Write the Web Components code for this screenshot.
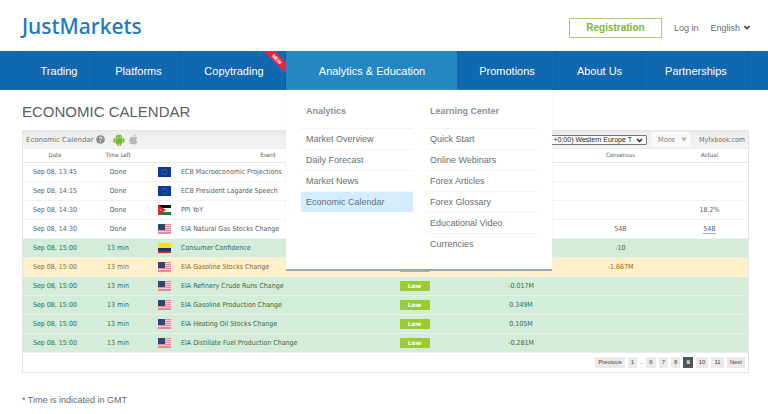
<!DOCTYPE html>
<html lang="en">
<head>
<meta charset="utf-8">
<title>JustMarkets – Economic Calendar</title>
<style>
  body { margin: 0; background: #fff; color: #666c70; font: 9px/12px "Liberation Sans", Arial, sans-serif; }
  main { padding: 0 19px 0 22px; }
  h1 { margin: 12px 0 8px; font-size: 15px; line-height: 20px; font-weight: 400; color: #5a6064; }
  .note { margin: 21px 0 0; font-size: 9px; line-height: 12px; }
</style>
</head>
<body>
<site-header></site-header>
<nav-bar>
  <nav-item label="Trading"></nav-item>
  <nav-item label="Platforms"></nav-item>
  <nav-item label="Copytrading" badge="NEW"></nav-item>
  <nav-item label="Analytics &amp; Education" active>
    <menu-column heading="Analytics" items="Market Overview|Daily Forecast|Market News|Economic Calendar" current="Economic Calendar"></menu-column>
    <menu-column heading="Learning Center" items="Quick Start|Online Webinars|Forex Articles|Forex Glossary|Educational Video|Currencies"></menu-column>
  </nav-item>
  <nav-item label="Promotions"></nav-item>
  <nav-item label="About Us"></nav-item>
  <nav-item label="Partnerships"></nav-item>
</nav-bar>
<main>
  <h1>ECONOMIC CALENDAR</h1>
  <economic-calendar></economic-calendar>
  <p class="note">* Time is indicated in GMT</p>
</main>
<script>
class BaseElement extends HTMLElement {
  connectedCallback() {
    if (this.shadowRoot) return;
    this.attachShadow({ mode: "open" }).innerHTML = this.render();
  }
}

customElements.define("site-header", class extends BaseElement {
  render() {
    return `<style>
      :host { display: block; }
      header { display: flex; align-items: center; height: 51px; padding: 0 18px 0 22px; box-sizing: border-box; }
      .logo { margin-right: auto; font: 500 21px/28px "Noto Sans", sans-serif; color: #2079bf; text-decoration: none; }
      .register { margin: 4px 12px 0 0; box-sizing: border-box; width: 93px; height: 20px; padding: 0; border: 1px solid #a9cf72; background: #fff; color: #7db83a; font: bold 10px/18px "Liberation Sans", Arial, sans-serif; }
      .login { margin: 4px 12px 0 0; color: #666c70; text-decoration: none; }
      .lang { display: flex; align-items: center; gap: 4px; margin-top: 4px; padding: 0; border: 0; background: none; color: #666c70; font: inherit; }
      svg { display: block; }
    </style>
    <header>
      <a class="logo" href="#">JustMarkets</a>
      <button class="register">Registration</button>
      <a class="login" href="#">Log in</a>
      <button class="lang">English<svg width="6" height="5" viewBox="0 0 6 5"><path d="M.5 1 3 3.5 5.500 1" fill="none" stroke="#3d4347" stroke-width="1.700"/></svg></button>
    </header>`;
  }
});

customElements.define("nav-bar", class extends BaseElement {
  render() {
    return `<style>
      :host { display: block; background: #1168ae; }
      nav { display: grid; grid-template-columns: 73fr 86fr 105fr 171fr 99fr 86fr 107fr; height: 39px; margin: 0 19px 0 21px; border-left: 1px solid #0f62a5; position: relative; z-index: 2; }
    </style>
    <nav><slot></slot></nav>`;
  }
});

customElements.define("nav-item", class extends BaseElement {
  render() {
    const active = this.hasAttribute("active");
    const badge = this.getAttribute("badge");
    return `<style>
      :host { display: block; position: relative; border-right: 1px solid #0f60a1; }
      :host([active]) { background: #2487c2; border-color: #2487c2; }
      .top { display: flex; align-items: center; justify-content: center; height: 39px; padding-left: 2px; color: #fff; font-size: 11px; text-decoration: none; }
      .corner { position: absolute; top: 0; right: -1px; width: 24px; height: 24px; overflow: hidden; }
      .corner span { position: absolute; top: 4px; right: -9px; width: 36px; background: #e6254d; color: #fff; font: bold 5px/8px "Liberation Sans", Arial, sans-serif; text-align: center; transform: rotate(45deg); }
      .menu { position: absolute; top: 39px; left: 0; display: grid; grid-template-columns: 1fr 1fr; gap: 12px; width: 266px; box-sizing: border-box; padding: 9px 15px 15px; background: #fff; border-bottom: 2px solid #93aeb2; box-shadow: 0 0 1px #d5dcdf; }
    </style>
    <a class="top" href="#">${this.getAttribute("label").replace("&", "&amp;")}</a>
    ${badge ? `<div class="corner"><span>${badge}</span></div>` : ""}
    ${active ? `<div class="menu"><slot></slot></div>` : ""}`;
  }
});

customElements.define("menu-column", class extends BaseElement {
  render() {
    const current = this.getAttribute("current");
    return `<style>
      :host { display: block; color: #686e72; }
      h2 { margin: 0; padding: 0 0 0 5px; font-size: 9px; line-height: 24px; height: 30px; color: #8c9194; border-bottom: 1px solid #f1f1f1; box-sizing: border-box; }
      ul { list-style: none; margin: 0; padding: 0; }
      li { border-bottom: 1px solid #f5f5f5; }
      li:last-child { border: 0; }
      a { display: block; padding-left: 5px; line-height: 20px; color: inherit; text-decoration: none; }
      .current { background: #d2edff; }
    </style>
    <h2>${this.getAttribute("heading")}</h2>
    <ul>${this.getAttribute("items").split("|").map(t => `<li${t === current ? ' class="current"' : ""}><a href="#">${t}</a></li>`).join("")}</ul>`;
  }
});

const usStripes = [0, 2, 4, 6, 8].map(y => `<rect y="${y}" width="13" height="1" fill="#e58a99"/>`).join("");
const starRing = Array.from({ length: 12 }, (_, i) => {
  const a = i * Math.PI / 6;
  return `<circle cx="${6.5 + 2.6 * Math.sin(a)}" cy="${5 - 2.6 * Math.cos(a)}" r=".4" fill="#b9a83c"/>`;
}).join("");
const FLAGS = {
  eu: `<rect width="13" height="10" fill="#0a3a9e"/>${starRing}`,
  jo: `<rect width="13" height="10" fill="#fff"/><rect width="13" height="3" fill="#111"/><rect y="7" width="13" height="3" fill="#14803c"/><path d="M0 0 8 5 0 10z" fill="#e3242f"/><circle cx="2.500" cy="5" r=".6" fill="#fff"/>`,
  us: `<rect width="13" height="10" fill="#f4c9d0"/>${usStripes}<rect y="9" width="13" height="1" fill="#e58a99"/><rect width="7" height="6" fill="#31466f"/>`,
  co: `<rect width="13" height="10" fill="#fbdf16"/><rect y="5" width="13" height="3" fill="#20336f"/><rect y="8" width="13" height="2" fill="#c8202f"/>`
};
customElements.define("flag-icon", class extends BaseElement {
  render() {
    return `<style>:host { display: block; width: 13px; margin: 0 auto; } svg { display: block; }</style>
    <svg width="13" height="10" viewBox="0 0 13 10">${FLAGS[this.getAttribute("code")]}</svg>`;
  }
});

customElements.define("impact-badge", class extends BaseElement {
  render() {
    return `<style>
      :host { display: block; width: 30px; margin: 0 auto; border-radius: 1px; background: #9bcb2c; color: #fff; font: bold 6px/10px "DejaVu Sans", sans-serif; text-align: center; }
    </style><slot></slot>`;
  }
});

customElements.define("calendar-toolbar", class extends BaseElement {
  render() {
    return `<style>
      :host { display: flex; align-items: center; height: 18px; padding: 0 3px; color: #6f6f6f; background: linear-gradient(#ececec, #f3f3f3); border-bottom: 1px solid #ebebeb; box-sizing: border-box; font: 7px/12px "DejaVu Sans", sans-serif; }
      svg { display: block; }
      .title { margin-right: 2px; }
      .help { margin-right: 8px; }
      .android { margin-right: 4px; }
      .select { position: relative; margin-left: auto; }
      .zone { display: block; width: 116px; height: 10px; padding: 0 12px 0 2px; box-sizing: border-box; appearance: none; border: 1px solid #767676; border-radius: 1px; background: #fff; color: #222; font: 7px/8px "Liberation Sans", Arial, sans-serif; }
      .select svg { position: absolute; right: 4px; top: 3px; }
      .more { display: flex; align-items: center; gap: 6px; height: 15px; margin: 0 9px 0 4px; padding: 0 3px 0 7px; border: 0; background: #f9f9f9; color: #808080; font: inherit; }
      .brand { color: inherit; text-decoration: none; font-family: "DejaVu Sans Condensed", "DejaVu Sans", sans-serif; }
    </style>
    <span class="title">Economic Calendar</span>
    <svg class="help" width="9" height="9" viewBox="0 0 9 9"><circle cx="4.500" cy="4.500" r="4.300" fill="#8b8b8b"/><path d="M3 3.600C3 1.600 6 1.700 6 3.400 6 4.300 4.500 4.300 4.500 5.500M4.500 6.200v1" fill="none" stroke="#fff" stroke-width="1"/></svg>
    <svg class="android" width="12" height="12" viewBox="0 0 12 12"><g fill="#6fb92c"><path d="M2.500 3.700C2.500-.1 9.500-.1 9.500 3.700z"/><path d="M2.500 4.200h7V9q0 .7-.7.7H8v1.500q0 .8-.8.8t-.7-.8V9.700h-1v1.500q0 .8-.7.800T4 11.200V9.700h-.8Q2.500 9.700 2.500 9z"/><rect x=".5" y="4.200" width="1.500" height="4.500" rx=".7"/><rect x="10" y="4.200" width="1.500" height="4.500" rx=".7"/></g><path d="M3.800.3l.8 1.200M8.200.3l-.8 1.200" stroke="#6fb92c" stroke-width=".5"/><circle cx="4.600" cy="2.400" r=".4" fill="#fff"/><circle cx="7.400" cy="2.400" r=".4" fill="#fff"/></svg>
    <svg width="9" height="11" viewBox="0 0 9 11"><path d="M8.500 7.800C7.900 9.500 7 10.500 6.200 10.500c-.6 0-.9-.4-1.600-.4s-1 .4-1.600.4C1.800 10.500.4 8.200.4 6 .4 3.900 1.700 2.900 2.900 2.900c.7 0 1.200.4 1.700.4s1.100-.5 2-.5c.7 0 1.300.4 1.600.9C6.700 4.700 6.900 7 8.500 7.800zM4.500 2.600C4.400 1.300 5.400.3 6.500.2 6.600 1.500 5.600 2.500 4.500 2.600z" fill="#b9b9b9"/></svg>
    <span class="select"><select class="zone" aria-label="Time zone"><option>(GMT +0:00) Western Europe T</option></select><svg width="7" height="5" viewBox="0 0 7 5"><path d="M1 1 3.500 3.500 6 1" fill="none" stroke="#222" stroke-width="1.500"/></svg></span>
    <button class="more">More<svg width="6" height="5" viewBox="0 0 6 5"><path d="M0 .5h6L3 4.500z" fill="#b7b7b7"/></svg></button>
    <a class="brand" href="#">Myfxbook.com</a>`;
  }
});

customElements.define("page-list", class extends BaseElement {
  render() {
    const link = t => `<a href="#"${t === "9" ? ' class="on" aria-current="page"' : ""}>${t}</a>`;
    return `<style>
      :host { display: block; }
      nav { display: flex; align-items: center; justify-content: flex-end; gap: 3px; height: 19px; padding-right: 3px; font: 6px/11px "Liberation Sans", Arial, sans-serif; color: #555; }
      a { padding: 0 3px; background: #ebe9e9; color: #444; text-decoration: none; }
      .on { background: #555; color: #fff; font-weight: bold; }
    </style>
    <nav aria-label="Pages">${link("Previous")}${link("1")}<span>..</span>${["6","7","8","9","10","11","Next"].map(link).join("")}</nav>`;
  }
});

const EVENTS = [
  ["13:45", "eu", "ECB Macroeconomic Projections"],
  ["14:15", "eu", "ECB President Lagarde Speech"],
  ["14:30", "jo", "PPI YoY", "", "", "", "18.2%"],
  ["14:30", "us", "EIA Natural Gas Stocks Change", "", "", "54B", "<u>54B</u>"],
  ["15:00", "co", "Consumer Confidence", "", "", "-10", "", "green"],
  ["15:00", "us", "EIA Gasoline Stocks Change", "Low", "", "-1.667M", "", "yellow"],
  ["15:00", "us", "EIA Refinery Crude Runs Change", "Low", "-0.017M", "", "", "green"],
  ["15:00", "us", "EIA Gasoline Production Change", "Low", "0.349M", "", "", "green"],
  ["15:00", "us", "EIA Heating Oil Stocks Change", "Low", "0.105M", "", "", "green"],
  ["15:00", "us", "EIA Distillate Fuel Production Change", "Low", "-0.281M", "", "", "green"]
];
customElements.define("economic-calendar", class extends BaseElement {
  render() {
    const rows = EVENTS.map(([time, flag, name, impact = "", prev = "", cons = "", actual = "", tone = ""]) => `<tr class="${tone}">
      <td>Sep 08, ${time}</td><td>${tone ? "13 min" : "Done"}</td><td><flag-icon code="${flag}"></flag-icon></td><td class="name">${name}</td>
      <td>${impact && `<impact-badge>${impact}</impact-badge>`}</td><td>${prev}</td><td>${cons}</td><td>${actual}</td></tr>`).join("");
    return `<style>
      :host { display: block; border: 1px solid #e4e4e4; color: #5c5c5c; font: 7px/10px "DejaVu Sans Condensed", "DejaVu Sans", sans-serif; }
      table { width: 100%; table-layout: fixed; border-collapse: collapse; }
      th { height: 13px; padding: 0; box-sizing: border-box; border-bottom: 1px solid #e9e9e9; font-size: 6px; font-weight: 400; }
      td { height: 19px; padding: 0; box-sizing: border-box; border-bottom: 1px solid #f3f3f3; text-align: center; white-space: nowrap; }
      td.name { padding-left: 2px; text-align: left; }
      tr.green td { background: #d4edda; color: #376946; border-color: #e3f4e7; }
      tr.yellow td { background: #fff0cb; color: #8b6c18; border-color: #fff0cb; }
      u { text-decoration: none; border-bottom: 1px solid #aaa; }
    </style>
    <calendar-toolbar></calendar-toolbar>
    <table>
      <colgroup><col style="width:64px"><col style="width:62px"><col style="width:30px"><col style="width:178px"><col style="width:115px"><col style="width:98px"><col style="width:101px"><col style="width:77px"></colgroup>
      <thead><tr><th>Date</th><th>Time Left</th><th></th><th>Event</th><th></th><th></th><th>Consensus</th><th>Actual</th></tr></thead>
      <tbody>${rows}</tbody>
    </table>
    <page-list></page-list>`;
  }
});
</script>
</body>
</html>
